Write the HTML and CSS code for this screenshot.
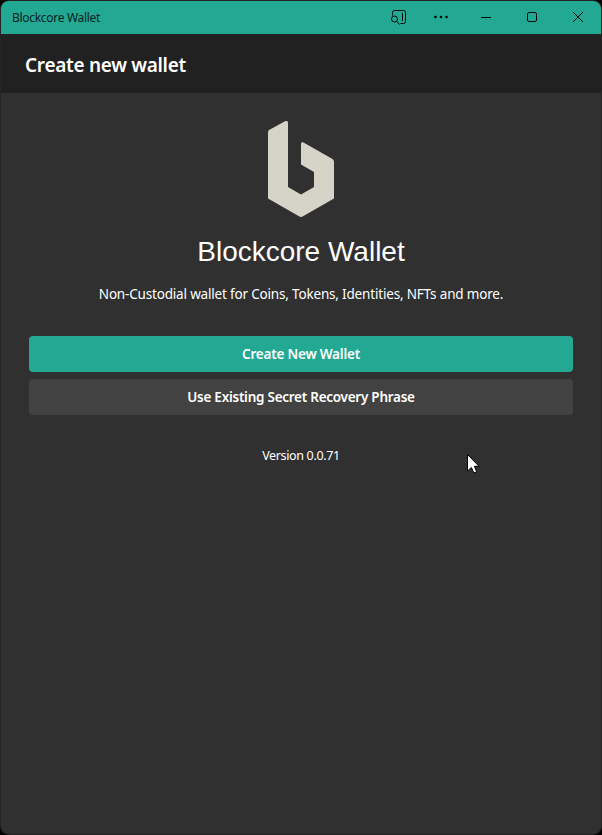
FILE: index.html
```
<!DOCTYPE html>
<html lang="en">
<head>
<meta charset="utf-8">
<title>Blockcore Wallet</title>
<link rel="stylesheet" href="styles.css">
</head>
<body>
<div class="window">
  <header class="titlebar">
    <span class="titlebar-name">Blockcore Wallet</span>
    <div class="controls">
      <svg class="control search" viewBox="0 0 42 33"><path d="M15.500 14.500V11.500q0-2 2-2H26.500q2 0 2 2V20.500q0 2-2 2H23.500M25.500 12V20"/><circle cx="17.500" cy="18" r="3"/><path d="M19.700 20.200L22.500 23.500"/></svg>
      <svg class="control menu" viewBox="0 0 44 33"><circle cx="16.500" cy="16" r="1.300"/><circle cx="22" cy="16" r="1.300"/><circle cx="27.500" cy="16" r="1.300"/></svg>
      <svg class="control" viewBox="0 0 46 33"><path d="M18 16.500H28"/></svg>
      <svg class="control" viewBox="0 0 46 33"><rect x="18.500" y="11.500" width="9" height="9" rx="1.500"/></svg>
      <svg class="control" viewBox="0 0 46 33"><path d="M18 11L28 21M28 11L18 21"/></svg>
    </div>
  </header>
  <div class="toolbar"><h2 class="page-title">Create new wallet</h2></div>
  <main class="content">
    <svg class="logo" viewBox="0 0 66 96"><path d="M0 11Q0 9.500 1.500 8.700L17 .3Q20 -1 20 2V66L33 73.500L46 66V51L33 43.500V23Q33 20.500 35.500 21.500L64.500 38Q66 39 66 41V77.500L35 95.300Q33 96.500 31 95.300L0 77.500Z"/></svg>
    <h1 class="brand">Blockcore Wallet</h1>
    <p class="tagline">Non-Custodial wallet for Coins, Tokens, Identities, NFTs and more.</p>
    <button class="button primary">Create New Wallet</button>
    <button class="button">Use Existing Secret Recovery Phrase</button>
    <p class="version">Version 0.0.71</p>
  </main>
</div>
<svg class="cursor" viewBox="0 0 14 21"><path d="M.5 .5V17L4.400 13.500L6.900 19L9.700 17.800L7.400 12.300H12Z"/></svg>
</body>
</html>
```
FILE: styles.css
```
* { box-sizing: border-box; }
body {
  margin: 0;
  padding: 1px;
  height: 835px;
  overflow: hidden;
  background: #000;
  color: #fff;
  font-family: "Noto Sans", sans-serif;
}
.window {
  height: 833px;
  border-radius: 8px;
  overflow: hidden;
  background: #303030;
  box-shadow: 0 0 0 1px #242424;
}
.titlebar {
  display: flex;
  justify-content: space-between;
  align-items: center;
  height: 33px;
  padding-left: 11px;
  background: #23a893;
  color: #08211d;
}
.titlebar-name { font-size: 12px; letter-spacing: -0.3px; }
.controls { display: flex; }
.control {
  width: 46px;
  height: 33px;
  fill: none;
  stroke: #020a09;
  stroke-width: 1;
}
.search { width: 42px; }
.menu { width: 44px; fill: #020a09; stroke: none; }
.toolbar {
  display: flex;
  align-items: center;
  height: 59px;
  padding: 2px 24px 0;
  background: #212121;
}
.page-title { margin: 0; font-size: 19px; font-weight: 600; letter-spacing: -0.3px; line-height: 32px; }
.content {
  display: flex;
  flex-direction: column;
  align-items: center;
  padding: 28px;
}
.logo { width: 66px; height: 96px; fill: #d6d3c9; }
.brand {
  margin: 17px 0 0;
  font: 400 28px/36px "Liberation Sans", Arial, sans-serif;
}
.tagline { margin: 14px 0 0; font-size: 13.5px; line-height: 20px; letter-spacing: -0.18px; white-space: nowrap; }
.button {
  width: 100%;
  height: 36px;
  margin: 7px 0 0;
  padding: 0;
  border: 0;
  border-radius: 4px;
  background: #424242;
  color: #fff;
  font: 600 13.5px/36px "Noto Sans", sans-serif;
  letter-spacing: -0.26px;
}
.primary { margin-top: 32px; background: #23a893; letter-spacing: -0.2px; }
.version { margin: 31px 0 0; font-size: 12.5px; line-height: 20px; letter-spacing: -0.35px; }
.cursor {
  position: absolute;
  left: 467px;
  top: 454px;
  width: 14px;
  height: 21px;
  fill: #fff;
  stroke: #000;
  stroke-width: 1;
}
```
